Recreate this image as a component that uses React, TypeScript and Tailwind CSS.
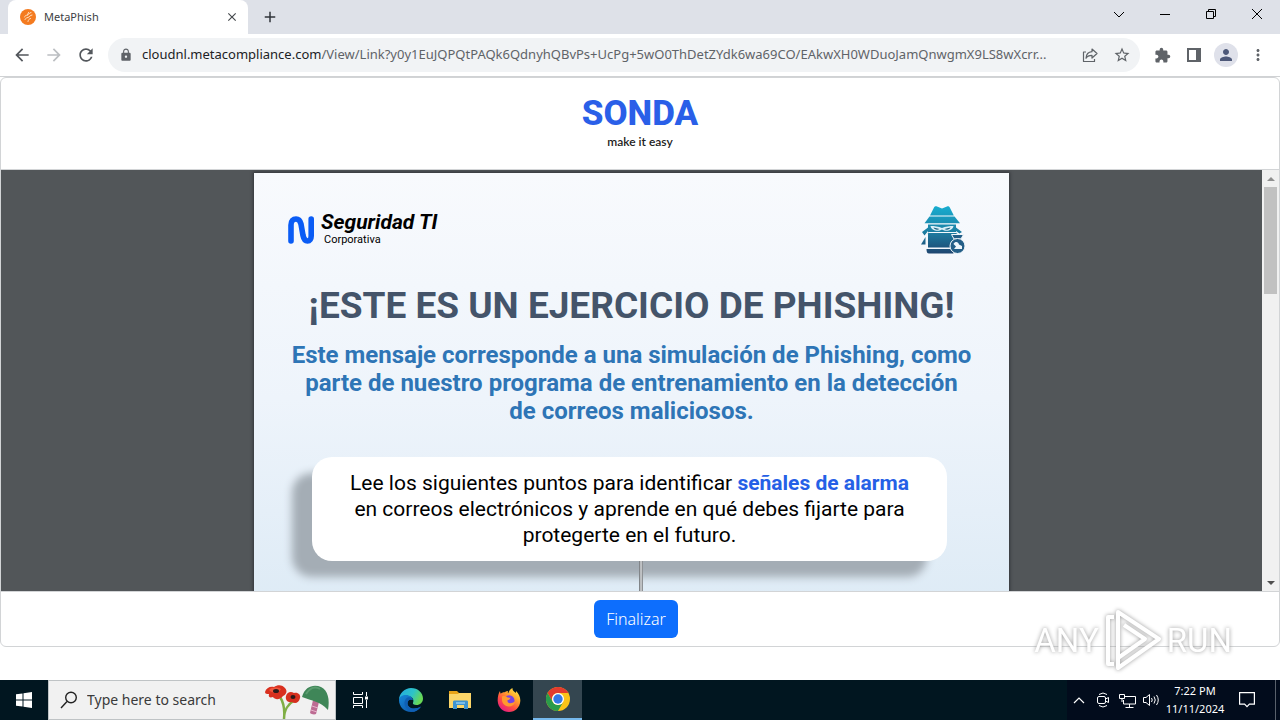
import type { ReactNode } from 'react';
import {
    MdArrowBack,
    MdArrowForward,
    MdRefresh,
    MdLock,
    MdStarOutline,
    MdExtension,
    MdPerson,
    MdMoreVert,
    MdClose,
    MdAdd,
} from 'react-icons/md';

interface IconButtonProps {
    label: string;
    className: string;
    children: ReactNode;
}

function IconButton({ label, className, children }: IconButtonProps) {
    return (
        <button type="button" aria-label={label} className={`flex shrink-0 items-center justify-center ${className}`}>
            {children}
        </button>
    );
}

function TabStrip() {
    return (
        <div className="flex h-[34px] items-stretch bg-[#dee1e8] pl-2">
            <div className="flex w-60 items-center rounded-t-lg bg-white pr-2 pl-3">
                <svg viewBox="0 0 16 16" className="size-4 shrink-0" aria-hidden="true">
                    <circle cx="8" cy="8" r="8" fill="#f47b20" />
                    <g fill="none" stroke="#ffe0c2" strokeWidth="1" strokeLinecap="round">
                        <path d="M11 3.500c-2 .3-2 2-3.500 2.500s-2.500.5-3 2" />
                        <path d="M12 6c-2 .2-2.500 2-4 2.500S5.500 9 5 10.500" />
                        <path d="M10.500 9.500c-1.500.5-2 1-2.500 3M8.500 3.500 7.500 6" />
                    </g>
                </svg>
                <span className="ml-2 flex-1 text-[11px] text-[#3c4043]">MetaPhish</span>
                <IconButton label="Close tab" className="size-4 text-[#45494d]">
                    <MdClose className="size-[14px]" />
                </IconButton>
            </div>
            <IconButton label="New tab" className="ml-3 w-5 text-[#30343a]">
                <MdAdd className="size-[18px]" />
            </IconButton>
            <div className="ml-auto flex text-black">
                <IconButton label="Search tabs" className="w-[46px] pb-[6px]">
                    <svg viewBox="0 0 12 12" className="size-3" fill="none" stroke="currentColor">
                        <path d="M1 4l5 5 5-5" />
                    </svg>
                </IconButton>
                <IconButton label="Minimize" className="w-[46px] pb-[6px]">
                    <svg viewBox="0 0 10 10" className="size-[10px]" stroke="currentColor">
                        <path d="M0 5.500h10" />
                    </svg>
                </IconButton>
                <IconButton label="Restore" className="w-[46px] pb-[6px]">
                    <svg viewBox="0 0 10 10" className="size-[10px]" fill="none" stroke="currentColor">
                        <path d="M.5 2.500h7v7h-7zM2.500 2.500v-2h7v7h-2" />
                    </svg>
                </IconButton>
                <IconButton label="Close" className="w-[46px] pb-[6px]">
                    <svg viewBox="0 0 10 10" className="size-[10px]" fill="none" stroke="currentColor">
                        <path d="M0 0l10 10M10 0L0 10" />
                    </svg>
                </IconButton>
            </div>
        </div>
    );
}

function Toolbar() {
    return (
        <div className="flex h-[43px] items-center border-b border-[#d0d2d4] bg-white pr-[10px] pl-2 text-[#5f6368]">
            <div className="flex gap-1">
                <IconButton label="Back" className="size-7 text-[#53575c]">
                    <MdArrowBack className="size-5" />
                </IconButton>
                <IconButton label="Forward" className="size-7 text-[#bcbfc2]">
                    <MdArrowForward className="size-5" />
                </IconButton>
                <IconButton label="Reload" className="size-7 text-[#53575c]">
                    <MdRefresh className="size-5" />
                </IconButton>
            </div>
            <div className="ml-2 flex h-[34px] min-w-0 flex-1 items-center rounded-full bg-[#f1f3f5] pr-[6px] pl-[11px]">
                <MdLock className="size-[14px] shrink-0" />
                <label htmlFor="address" className="ml-[9px] text-[13px] text-[#202124]">
                    cloudnl.metacompliance.com
                </label>
                <input
                    id="address"
                    type="text"
                    readOnly
                    value="/View/Link?y0y1EuJQPQtPAQk6QdnyhQBvPs+UcPg+5wO0ThDetZYdk6wa69CO/EAkwXH0WDuoJamQnwgmX9LS8wXcrr..."
                    className="min-w-0 flex-1 bg-transparent text-[13px] text-[#5f6368] outline-none"
                />
                <IconButton label="Share this page" className="ml-2 size-6">
                    <svg viewBox="0 0 16 16" className="size-4" fill="none" stroke="currentColor" strokeWidth="1.2" strokeLinejoin="round">
                        <path d="M4 5H1.500v9.500h11V12" />
                        <path d="M10 2l5 4.500L10 11V8.300c-3 0-5 .8-6 3 .2-4 2.500-6.300 6-6.600z" />
                    </svg>
                </IconButton>
                <IconButton label="Bookmark" className="ml-2 size-6">
                    <MdStarOutline className="size-[18px]" />
                </IconButton>
            </div>
            <div className="ml-[10px] flex items-center gap-2">
                <IconButton label="Extensions" className="size-6">
                    <MdExtension className="size-[17px]" />
                </IconButton>
                <IconButton label="Side panel" className="size-6">
                    <svg viewBox="0 0 14 14" className="size-[14px]">
                        <path d="M1 1h12v12H1z" fill="none" stroke="currentColor" strokeWidth="2" />
                        <path d="M9 1h4v12H9z" fill="currentColor" />
                    </svg>
                </IconButton>
                <IconButton label="Profile" className="size-6 rounded-full bg-[#dfe1ea] text-[#4d5878]">
                    <MdPerson className="size-[18px]" />
                </IconButton>
                <IconButton label="Menu" className="size-6">
                    <MdMoreVert className="size-[18px]" />
                </IconButton>
            </div>
        </div>
    );
}

function HackerIcon() {
    return (
        <svg viewBox="0 0 44 48" className="h-12 w-11" aria-hidden="true">
            <defs>
                <linearGradient id="hacker" x1="0" y1="0" x2="0" y2="48" gradientUnits="userSpaceOnUse">
                    <stop offset="0" stopColor="#18add0" />
                    <stop offset=".5" stopColor="#1c82a6" />
                    <stop offset="1" stopColor="#1f456f" />
                </linearGradient>
            </defs>
            <g fill="url(#hacker)">
                <path d="M9 9.500l4-8C13.500.4 15 0 16 .5l5 2 5-2c1-.5 2.300 0 2.800 1l4 8z" />
                <path d="M8.500 10.500h25l5.500 6.800H3.500z" />
                <path d="M7 18.500h28v3l6 4.500-2.500 1.500L35 25v4H7v-4l-3.500 4.500L1 26l6-4.500z" />
                <path d="M0 38.500L4.500 31v7.500z" />
            </g>
            <path d="M9.500 20c4 0 8 .6 11.500 2 3.500-1.400 7.500-2 11.500-2-.5 4-7 6.500-11.500 3.500C16.500 26.500 10 24 9.500 20z" fill="#dcf0f8" />
            <path d="M12.500 21.500l6 1.500c-2.500 1.500-5 .5-6-1.500zM29.500 21.500l-6 1.500c2.500 1.500 5 .5 6-1.500z" fill="#17607f" />
            <path d="M8 26.500h27c.8 0 1.500.6 1.500 1.400V42h-30V27.900c0-.8.7-1.400 1.500-1.400z" fill="url(#hacker)" stroke="#f3f8fc" />
            <path d="M5.500 43h27v4.500H8c-1.800 0-2.500-1.500-2.500-4.500z" fill="url(#hacker)" />
            <g fill="#245f88" stroke="#f3f8fc">
                <path d="M30.500 28.500h12l-2.500 4.500h-7z" />
                <circle cx="36.500" cy="40" r="7.500" />
            </g>
            <path d="M32.500 38c1.500-3 5-2.500 5.500.5l3 1.500v3h-8l2-2.500z" fill="#eef6fb" />
        </svg>
    );
}

function PhishingPage() {
    return (
        <article className="w-[755px] bg-linear-to-b from-[#f8fafd] via-[#eef4fb] to-[#dceaf5] pt-[33px] font-[Roboto,sans-serif] shadow-[0_0_3px_1px_#33363a]">
            <header className="flex items-center justify-between pr-11 pl-[34px]">
                <div className="flex items-center gap-[7px]">
                    <svg viewBox="0 0 26 28" className="h-7 w-[26px]" role="img" aria-label="Sonda">
                        <path
                            d="M3 25V9c0-4 2.300-6 5-6s4.200 1.700 5 5l2 11.400c.8 4 2.300 5.600 4.500 5.600s3.700-2 3.700-5V3"
                            fill="none"
                            stroke="#0a5cf5"
                            strokeWidth="5.6"
                            strokeLinecap="round"
                        />
                    </svg>
                    <div className="text-black">
                        <p className="text-[21px] leading-5 font-bold italic">Seguridad TI</p>
                        <p className="pl-[3px] text-[11px] leading-4">Corporativa</p>
                    </div>
                </div>
                <HackerIcon />
            </header>
            <h1 className="mt-7 text-center text-[37px] leading-12 font-bold whitespace-nowrap text-[#44546a]">
                ¡ESTE ES UN EJERCICIO DE PHISHING!
            </h1>
            <p className="mt-[11px] text-center text-2xl leading-7 font-bold text-[#2e75b6]">
                Este mensaje corresponde a una simulación de Phishing, como
                <br />
                parte de nuestro programa de entrenamiento en la detección
                <br />
                de correos maliciosos.
            </p>
            <p className="mt-8 mr-[62px] ml-[58px] rounded-[20px] bg-white py-[13px] text-center text-[21px] leading-[26px] text-black shadow-[-20px_16px_8px_#a4adb5]">
                Lee los siguientes puntos para identificar <strong className="font-bold text-[#2560e6]">señales de alarma</strong>
                <br />
                en correos electrónicos y aprende en qué debes fijarte para
                <br />
                protegerte en el futuro.
            </p>
            <div className="relative ml-[385px] h-16 w-1 bg-linear-to-r from-[#666a6e] via-[#d8dadc] to-[#777b7f]" />
        </article>
    );
}

function ScrollRail() {
    return (
        <div className="flex w-[17px] shrink-0 flex-col items-center bg-[#f1f1f1]">
            <IconButton label="Scroll up" className="h-[17px] w-full text-[#8f8f8f]">
                <svg viewBox="0 0 8 4" className="h-1 w-2" fill="currentColor">
                    <path d="M0 4l4-4 4 4z" />
                </svg>
            </IconButton>
            <div className="h-[107px] w-[13px] bg-[#c1c1c1]" />
            <IconButton label="Scroll down" className="mt-auto h-[17px] w-full text-[#505050]">
                <svg viewBox="0 0 8 4" className="h-1 w-2" fill="currentColor">
                    <path d="M0 0l4 4 4-4z" />
                </svg>
            </IconButton>
        </div>
    );
}

function Watermark() {
    return (
        <div className="pointer-events-none absolute right-12 bottom-2 flex items-center font-[Roboto,sans-serif] text-[33px] leading-none text-white drop-shadow-[0_0_2px_#999]">
            <span>ANY</span>
            <svg viewBox="0 0 60 64" className="mx-1 h-16 w-[60px]" fill="none" stroke="#fff" strokeWidth="4" strokeLinejoin="round">
                <path d="M15 4l41 27-41 29z" />
                <path d="M21 17l21 14-27 19" />
                <path d="M11 9H5v47h6" />
            </svg>
            <span>RUN</span>
        </div>
    );
}

function EdgeIcon() {
    return (
        <svg viewBox="0 0 24 24" className="size-6" aria-hidden="true">
            <defs>
                <linearGradient id="edgeTop" x1="0" y1="0" x2="1" y2=".4">
                    <stop offset="0" stopColor="#23a9e3" />
                    <stop offset=".6" stopColor="#2dc3c8" />
                    <stop offset="1" stopColor="#67d856" />
                </linearGradient>
                <linearGradient id="edgeBase" x1="0" y1="0" x2="1" y2="1">
                    <stop offset="0" stopColor="#1687d9" />
                    <stop offset="1" stopColor="#0c4fa0" />
                </linearGradient>
            </defs>
            <path d="M0 12C0 5 6 0 12 0c7 0 12 5 12 10.500 0 4-3 6.500-6.500 6.500-3 0-4-1.200-3.500-2.300C15 13 14.500 9 9.500 8 5 7 1 9 0 12z" fill="url(#edgeTop)" />
            <path d="M0 12c.5-3.500 4-5.500 8-5 3.500.5 5.500 2.800 5.800 5-2.500-1.500-5.300 0-5.300 3.200 0 4.800 6.500 7.300 13.500 3.300-2 3.500-5.800 5.500-10 5.500C5 24 0 18.500 0 12z" fill="url(#edgeBase)" />
            <path d="M8.500 9.500c-3 2-4 6-2 9.500s5.500 5 8.500 4.700c3-.7 5.500-2.700 7-5.200-7 4-13.500 1.500-13.500-3.300 0-3.200 2.800-4.700 5.300-3.200-1-2.200-3-3.300-5.300-2.500z" fill="#0f5fb4" />
        </svg>
    );
}

function ExplorerIcon() {
    return (
        <svg viewBox="0 0 22 20" className="h-5 w-[22px]" aria-hidden="true">
            <path d="M0 1h8l2 2h12v5H0z" fill="#e8a317" />
            <path d="M0 4h9l1-1h12v15H0z" fill="#fbd568" />
            <path d="M4 19v-7c0-1 .7-1.500 1.500-1.500h12c1 0 1.500.5 1.500 1.500v7h-4v-4H8v4z" fill="#3e93cf" />
            <path d="M7 12h9v2H7z" fill="#79bde9" />
        </svg>
    );
}

function FirefoxIcon() {
    return (
        <svg viewBox="0 0 24 24" className="size-6" aria-hidden="true">
            <defs>
                <linearGradient id="fox" x1=".9" y1="0" x2=".2" y2="1">
                    <stop offset="0" stopColor="#fff04a" />
                    <stop offset=".35" stopColor="#ffa72c" />
                    <stop offset=".65" stopColor="#ff5040" />
                    <stop offset="1" stopColor="#e3158a" />
                </linearGradient>
            </defs>
            <path d="M3 3c0 1.200.3 2 .8 2.800C4.700 4.700 6 4.200 7.500 4.300 9 3.500 10 2.800 11 3c-.4.900-.3 1.600.2 2.300C12 3 13 1 15.500 0c-.3 2.500 1.500 3.500 3.500 5-.1-.8 0-1.500 0-2 2.800 2.500 4.500 6 4.300 10C23 19.500 18 24 12 24S1 19.500.7 13C.5 9 1.500 5.500 3 3z" fill="url(#fox)" />
            <circle cx="12.200" cy="12.500" r="5.300" fill="#7542e5" />
            <path d="M5 8.500c2-.8 4-.5 5 .5 1 .8 2 .5 3.500.8-.3 1.500-1.500 2-3 2.500-.3 1.500.8 3 2.500 3 2.200 0 3.300-1.500 5-1.300-.8 3-3.500 4.800-6.500 4.500-4-.4-6.500-3.500-6.500-6.500z" fill="#ff9a2e" />
        </svg>
    );
}

function ChromeIcon() {
    return (
        <svg viewBox="0 0 24 24" className="size-6" aria-hidden="true">
            <circle cx="12" cy="12" r="12" fill="#fbc318" />
            <path d="M1.600 6a12 12 0 0 1 20.800 0H12a6 6 0 0 0-5.200 9z" fill="#e33b2e" />
            <path d="M1.600 6a12 12 0 0 0 10.400 18l5.200-9a6 6 0 0 1-10.400 0z" fill="#2a9b4a" />
            <circle cx="12" cy="12" r="6" fill="#fff" />
            <circle cx="12" cy="12" r="4.700" fill="#3578e5" />
        </svg>
    );
}

function SearchArt() {
    return (
        <svg viewBox="0 0 66 38" className="h-[38px] w-[66px] shrink-0" aria-hidden="true">
            <path d="M15 16c4 6 5 12 4 22M30 19c-7 4-11 9-11 19" fill="none" stroke="#7fae45" strokeWidth="2.500" />
            <path d="M0 11c1-4 5-6 9-5 4-3 9-2 11 1 3 3 1 7-2 8-3 4-8 4-10 1-3 1-5 0-4-3-2 0-4 0-4-2z" fill="#d9301f" />
            <path d="M4 9c3-3 8-3 12-1-2 4-8 5-12 1z" fill="#f0553c" />
            <ellipse cx="11" cy="10" rx="3" ry="2" fill="#2b1a1a" />
            <path d="M21 15c1-4 5-5 8-3 4-1 7 2 6 5-1 5-5 6-8 4-4 1-7-2-6-6z" fill="#d5301f" />
            <ellipse cx="28" cy="16" rx="2.500" ry="2" fill="#2b1a1a" />
            <path d="M48 19l6 2-3 12c-2 1-5 0-6-1z" fill="#bd6c93" />
            <path d="M47 25l6 2M46 29l6 2" stroke="#e6b3cb" />
            <path d="M37 16C40 5 49 3 56 6c7 3 9 13 7 23-8-9-16-9-26-13z" fill="#3f8658" />
            <path d="M41 13c4-6 9-8 14-5" fill="none" stroke="#5c9d70" strokeWidth="2" />
        </svg>
    );
}

function Taskbar() {
    return (
        <footer className="flex h-10 shrink-0 bg-[#011620] text-white">
            <IconButton label="Start" className="w-12">
                <svg viewBox="0 0 16 16" className="size-4" fill="currentColor">
                    <path d="M0 2.300L6.500 1.400v6.100H0zM7.500 1.200L16 0v7.500H7.500zM0 8.500h6.500v6.100L0 13.700zM7.500 8.500H16V16l-8.500-1.200z" />
                </svg>
            </IconButton>
            <div className="flex w-72 items-center border border-[#bfc3c5] bg-[#f1f1f1] pr-1 pl-[11px]">
                <label htmlFor="search" aria-label="Search" className="shrink-0 text-[#222]">
                    <svg viewBox="0 0 18 18" className="size-[18px]" fill="none" stroke="currentColor" strokeWidth="1.400">
                        <circle cx="11" cy="6.500" r="5.300" />
                        <path d="M7 10.500L1 17" />
                    </svg>
                </label>
                <input
                    id="search"
                    type="text"
                    placeholder="Type here to search"
                    className="ml-[9px] min-w-0 flex-1 bg-transparent text-sm outline-none placeholder:text-[#3a3a3a]"
                />
                <SearchArt />
            </div>
            <IconButton label="Task View" className="w-12">
                <svg viewBox="0 0 17 16" className="h-4 w-[17px]" fill="none" stroke="currentColor">
                    <path d="M1.500 0v2.500h9V0M1.500 5.500h9v6h-9zM1.500 16v-2.500h9V16M14.500 0v4M14.500 8v8" />
                    <path d="M13 4.500h3v3h-3z" fill="currentColor" stroke="none" />
                </svg>
            </IconButton>
            <IconButton label="Microsoft Edge" className="ml-[3px] w-12">
                <EdgeIcon />
            </IconButton>
            <IconButton label="File Explorer" className="w-[49px]">
                <ExplorerIcon />
            </IconButton>
            <IconButton label="Firefox" className="w-[49px]">
                <FirefoxIcon />
            </IconButton>
            <IconButton label="Google Chrome" className="w-[49px] border-b-2 border-[#76b9ed] bg-[#344650]">
                <ChromeIcon />
            </IconButton>
            <div className="ml-auto flex items-center bg-[#020c1c]">
                <IconButton label="Show hidden icons" className="w-6">
                    <svg viewBox="0 0 12 12" className="size-3" fill="none" stroke="currentColor" strokeWidth="1.200">
                        <path d="M1 9l5-5 5 5" />
                    </svg>
                </IconButton>
                <IconButton label="Meet Now" className="w-6">
                    <svg viewBox="0 0 14 16" className="h-4 w-[14px]" fill="none" stroke="currentColor">
                        <path d="M3 2.500Q7-.5 11 2.500M3 13.500q4 3 8 0" />
                        <rect x="1.500" y="4.500" width="8" height="7" rx="1.500" />
                        <path d="M9.500 7l3-1.500v5l-3-1.500" />
                    </svg>
                </IconButton>
                <IconButton label="Network" className="w-6">
                    <svg viewBox="0 0 17 15" className="h-[15px] w-[17px]" fill="none" stroke="currentColor">
                        <path d="M6 3.500h10.500v7.500H4.500V7M10.500 11v3M6.500 14.500h8" />
                        <path d="M.5 1.500h5v4h-5zM3 5.500V9" />
                    </svg>
                </IconButton>
                <IconButton label="Volume" className="w-6">
                    <svg viewBox="0 0 17 14" className="h-[14px] w-[17px]" fill="none" stroke="currentColor">
                        <path d="M.5 4.500H3l3.500-3v11l-3.500-3H.5zM8.500 5q1.500 2 0 4M11 3.500q2.500 3.500 0 7M13.500 2q3.500 5 0 10" />
                    </svg>
                </IconButton>
                <div className="w-16 text-center text-[11px] leading-[18px] whitespace-nowrap">
                    <p>7:22 PM</p>
                    <p>11/11/2024</p>
                </div>
                <IconButton label="Notifications" className="ml-1 w-8">
                    <svg viewBox="0 0 16 16" className="size-4" fill="none" stroke="currentColor" strokeWidth="1.200">
                        <path d="M.6.6h14.800v11.500h-5L8 14.700l-2.400-2.600h-5z" />
                    </svg>
                </IconButton>
                <div className="ml-3 h-full w-[5px] border-l border-[#59616b]" />
            </div>
        </footer>
    );
}

export default function App() {
    return (
        <div className="flex h-screen flex-col overflow-hidden bg-white font-['Noto_Sans','Open_Sans',sans-serif]">
            <TabStrip />
            <Toolbar />
            <main className="relative flex min-h-0 flex-1 flex-col pb-[33px]">
                <section className="flex min-h-0 flex-1 flex-col rounded-md border border-[#d2d4d6]">
                    <div className="flex flex-col items-center pt-[15px] pb-5">
                        <p className="text-[35px] leading-[42px] font-extrabold text-[#2a5fe8] font-[Roboto,sans-serif]">SONDA</p>
                        <p className="text-xs leading-[14px] font-semibold text-[#222] font-[Lato,sans-serif]">make it easy</p>
                    </div>
                    <div className="flex min-h-0 flex-1 border-y border-[#d2d4d6]">
                        <div className="flex min-w-0 flex-1 items-start justify-center overflow-hidden bg-[#525659] pt-[3px]">
                            <PhishingPage />
                        </div>
                        <ScrollRail />
                    </div>
                    <div className="flex justify-center py-2 pr-2">
                        <button type="button" className="h-[38px] rounded-md bg-[#0d6efd] px-3 text-base font-light text-white">
                            Finalizar
                        </button>
                    </div>
                </section>
                <Watermark />
            </main>
            <Taskbar />
        </div>
    );
}
